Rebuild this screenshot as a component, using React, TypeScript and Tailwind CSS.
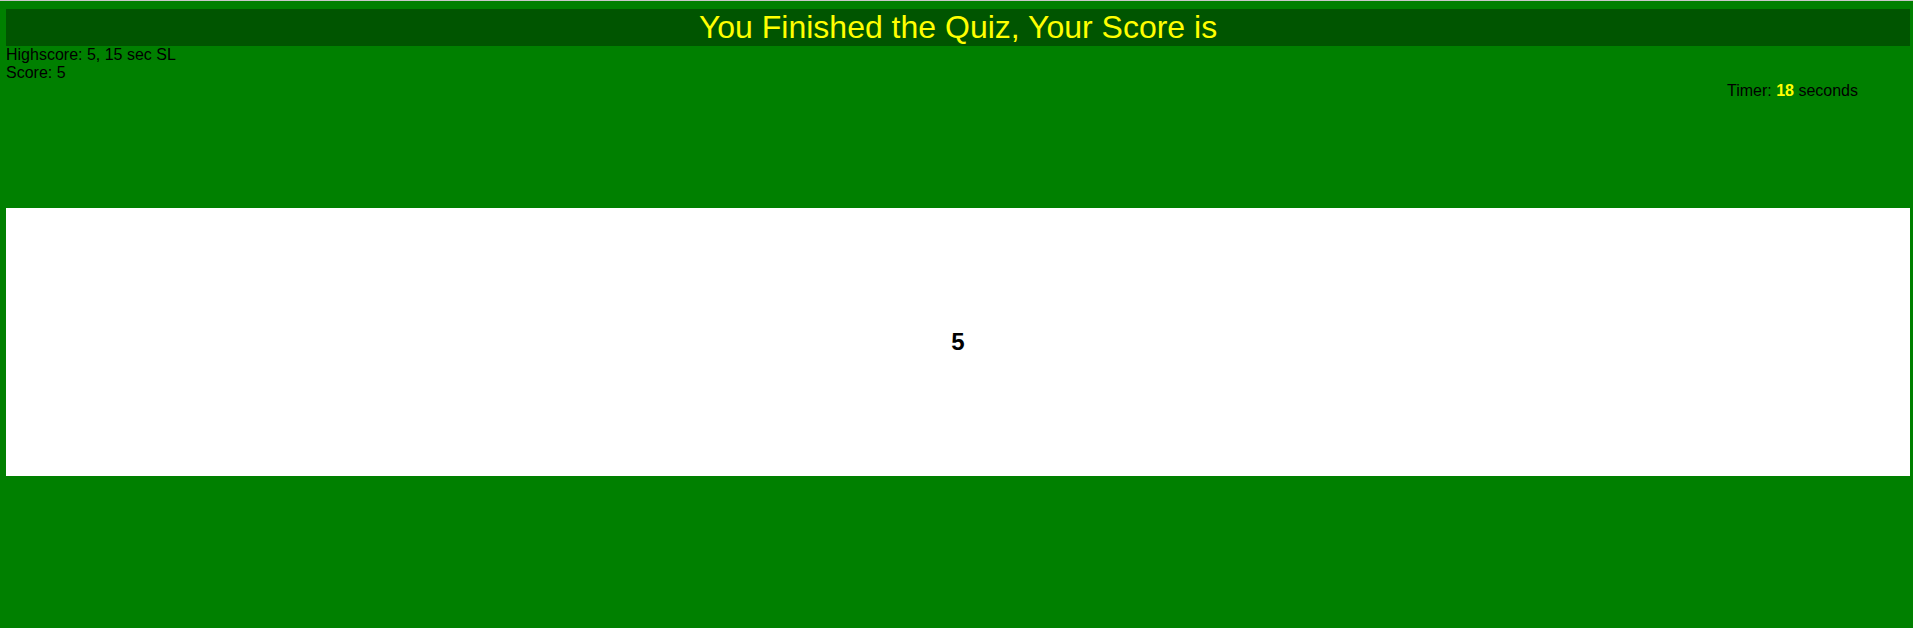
import React from 'react';

const App: React.FC = () => {
  const highscore = { score: 5, time: 15, initials: 'SL' };
  const score = 5;
  const secondsLeft = 18;

  return (
    <div className="h-[628px] w-full bg-[#008000] border-t border-[#c8c8c8] pt-[8px] pl-[6px] pr-[3px] text-black font-['Liberation_Sans',Arial,sans-serif] text-[16px] leading-[18px]">
      {/* Header */}
      <h1 className="bg-[#005500] text-[#ffff00] text-[32px] leading-[37px] text-center">
        You Finished the Quiz, Your Score is
      </h1>

      {/* Scores */}
      <div>
        Highscore: {highscore.score}, {highscore.time} sec {highscore.initials}
      </div>
      <div>Score: {score}</div>

      {/* Timer */}
      <div className="flex justify-end pr-[52px]">
        <span>
          Timer: <span className="font-bold text-[#ffff00]">{secondsLeft}</span> seconds
        </span>
      </div>

      {/* Result card */}
      <div className="mt-[108px] h-[268px] bg-white flex items-center justify-center">
        <h2 className="text-[24px] leading-[28px] font-bold">{score}</h2>
      </div>
    </div>
  );
};

export default App;
